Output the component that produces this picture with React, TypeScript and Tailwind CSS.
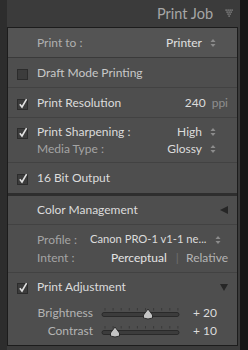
import type { ReactNode } from 'react'

const font = { fontFamily: 'Lato, "Open Sans", sans-serif' }

function Check({ on }: { on: boolean }) {
  return (
    <svg width="14" height="14" viewBox="0 0 14 14" className="shrink-0">
      <rect x="0.5" y="3.5" width="10" height="10" fill="#3c3c3c" stroke="#2c2c2c" />
      {on && <path d="M2.8 8.3 L5 11 L9.6 3.2" fill="none" stroke="#e2e2e2" strokeWidth="1.6" />}
    </svg>
  )
}

function Spinner() {
  return (
    <svg width="6" height="10" viewBox="0 0 6 10" className="shrink-0">
      <path d="M0.5 4 L3 1 L5.5 4 Z" fill="#8c8c8c" />
      <path d="M0.5 6 L3 9 L5.5 6 Z" fill="#8c8c8c" />
    </svg>
  )
}

function Slider({ at }: { at: number }) {
  const ticks = Array.from({ length: 10 }, (_, i) => 4 + i * 8.1)
  return (
    <svg width="80" height="16" viewBox="0 0 80 16" className="shrink-0">
      {ticks.map(x => (
        <line key={x} x1={x} y1="3" x2={x} y2="5.5" stroke="#3a3a3a" strokeWidth="1" />
      ))}
      <rect x="1" y="7.5" width="77" height="4" rx="2" fill="#3c3c3c" stroke="#2a2a2a" />
      <path
        d={`M${at} 4 L${at + 4.5} 10 L${at + 4.5} 13 Q${at} 15 ${at - 4.5} 13 L${at - 4.5} 10 Z`}
        fill="#c4c4c4"
        stroke="#2c2c2c"
        strokeWidth="1"
      />
    </svg>
  )
}

function Row({ h, children, className = '' }: { h: string; children: ReactNode; className?: string }) {
  return <div className={`flex items-center whitespace-nowrap ${h} ${className}`}>{children}</div>
}

const Sep = () => <div className="h-px bg-[#424242]" />

export default function App() {
  return (
    <div className="flex h-[350px] w-[248px] bg-[#161616] text-[12px]" style={font}>
      <div className="w-[7px] bg-[#2d2d2d]" />
      <div className="flex w-[233px] flex-col bg-[#3b3b3b]">
        <div className="flex h-[27px] items-center justify-end pr-[6px]">
          <span className="text-[14.5px] text-[#a6a6a6]">Print Job</span>
          <svg width="9" height="9" viewBox="0 0 9 9" className="ml-[12px]">
            {[
              [1, 1], [3, 1], [5, 1], [7, 1],
              [2, 3], [4, 3], [6, 3],
              [3, 5], [5, 5],
              [4, 7],
            ].map(([x, y]) => (
              <rect key={`${x}-${y}`} x={x - 0.5} y={y - 0.5} width="1.2" height="1.2" fill="#a0a0a0" />
            ))}
          </svg>
        </div>

        <div className="mr-[2px] flex h-[319px] flex-col border border-[#1c1c1c] bg-[#4e4e4e]">
          <Row h="h-[29px]" className="bg-[#545454] pl-[29px] pr-[21px]">
            <span className="text-[#b0b0b0]">Print to :</span>
            <span className="ml-auto mr-[8px] text-[#e0e0e0]">Printer</span>
            <Spinner />
          </Row>
          <div className="h-px bg-[#3a3a3a]" />
          <Row h="h-[29px]" className="pl-[9px]">
            <Check on={false} />
            <span className="ml-[6px] text-[#c8c8c8]">Draft Mode Printing</span>
          </Row>
          <Sep />
          <Row h="h-[29px]" className="pl-[9px] pr-[9px]">
            <Check on />
            <span className="ml-[6px] text-[#dcdcdc]">Print Resolution</span>
            <span className="ml-auto text-[#dcdcdc]">240</span>
            <span className="ml-[6px] text-[#8e8e8e]">ppi</span>
          </Row>
          <Sep />
          <div className="flex h-[44px] flex-col justify-center whitespace-nowrap pl-[9px] pr-[21px]">
            <div className="flex h-[17px] items-center">
              <Check on />
              <span className="ml-[6px] text-[#dcdcdc]">Print Sharpening :</span>
              <span className="ml-auto mr-[8px] text-[#dcdcdc]">High</span>
              <Spinner />
            </div>
            <div className="flex h-[17px] items-center pl-[20px]">
              <span className="text-[#a4a4a4]">Media Type :</span>
              <span className="ml-auto mr-[8px] text-[#dcdcdc]">Glossy</span>
              <Spinner />
            </div>
          </div>
          <Sep />
          <Row h="h-[30px]" className="pl-[9px]">
            <Check on />
            <span className="ml-[6px] text-[#dcdcdc]">16 Bit Output</span>
          </Row>
          <div className="h-[3px] bg-[#2e2e2e]" />
          <Row h="h-[28px]" className="pl-[29px] pr-[9px]">
            <span className="text-[#dcdcdc]">Color Management</span>
            <svg width="8" height="8" viewBox="0 0 8 8" className="ml-auto">
              <path d="M0 4 L8 0 L8 8 Z" fill="#262626" />
            </svg>
          </Row>
          <Sep />
          <div className="flex h-[47px] flex-col justify-center whitespace-nowrap pl-[29px] pr-[9px]">
            <div className="flex h-[18px] items-center">
              <span className="w-[53px] shrink-0 text-[#a4a4a4]">Profile :</span>
              <span className="mr-[9px] text-[11.2px] text-[#dcdcdc]">Canon PRO-1 v1-1 ne...</span>
              <Spinner />
            </div>
            <div className="flex h-[18px] items-center">
              <span className="w-[74px] shrink-0 text-[#a4a4a4]">Intent :</span>
              <span className="text-[#e4e4e4]">Perceptual</span>
              <span className="ml-[9px] text-[#6e6e6e]">|</span>
              <span className="ml-auto text-[#b4b4b4]">Relative</span>
            </div>
          </div>
          <Sep />
          <div className="flex flex-1 flex-col whitespace-nowrap">
            <Row h="h-[28px]" className="pl-[9px] pr-[9px]">
              <Check on />
              <span className="ml-[6px] text-[#dcdcdc]">Print Adjustment</span>
              <svg width="8" height="8" viewBox="0 0 8 8" className="ml-auto">
                <path d="M0 1 L8 1 L4 8 Z" fill="#262626" />
              </svg>
            </Row>
            <div className="mt-[3px] flex h-[18px] items-center">
              <span className="w-[85px] text-right text-[#b4b4b4]">Brightness</span>
              <span className="ml-[8px]"><Slider at={47} /></span>
              <span className="ml-auto mr-[20px] text-[#dcdcdc]">+ 20</span>
            </div>
            <div className="flex h-[18px] items-center">
              <span className="w-[85px] text-right text-[#b4b4b4]">Contrast</span>
              <span className="ml-[8px]"><Slider at={14} /></span>
              <span className="ml-auto mr-[20px] text-[#dcdcdc]">+ 10</span>
            </div>
          </div>
        </div>
      </div>
    </div>
  )
}
